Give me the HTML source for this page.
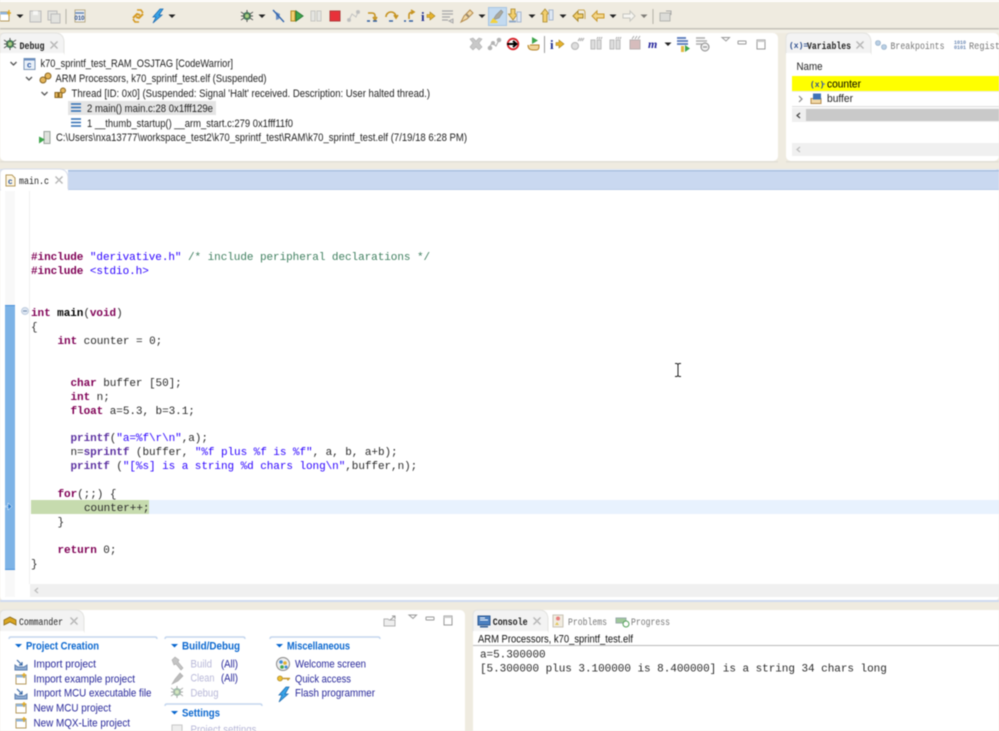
<!DOCTYPE html>
<html><head><meta charset="utf-8">
<style>
html,body{margin:0;padding:0;width:999px;height:731px;overflow:hidden;background:#efebe0}
svg{display:block;filter:blur(.45px)}
text{white-space:pre;font-family:"Liberation Sans",sans-serif;font-size:11px;fill:#222}
.m{font-family:"Liberation Mono",monospace;letter-spacing:-.06px;fill:#2a2a2a}
.k{font-weight:bold;fill:#7f0055}
.s{fill:#2a00ff}
.c{fill:#3f7f5f}
.f{font-weight:bold;fill:#5b30a0}
.b{font-weight:bold;fill:#000}
.t{font-family:"Liberation Mono",monospace;font-size:10px;fill:#222}
.t2{font-family:"Liberation Mono",monospace;font-size:10px;fill:#777}
.l{fill:#27279a}
.g{fill:#b8b8d8}
.h{font-weight:bold;fill:#0a67cf;font-size:11px}
</style></head><body>
<svg width="999" height="731" viewBox="0 0 999 731" xmlns="http://www.w3.org/2000/svg">
<defs>
<g id="dd"><path d="M-3.5-1.5h7L0 2z" fill="#222"/></g>
<g id="x"><path d="M-3.5-3.5l7 7m0-7l-7 7" stroke="#888" stroke-width="1.2" fill="none"/><path d="M-3.5-3.5l7 7m0-7l-7 7" stroke="#fff" stroke-width=".4" fill="none"/></g>
<g id="bug"><circle r="4" fill="#3f8a5a"/><path d="M-6-4l12 8M-6 4l12-8M0-6v12M-6 0h12" stroke="#555" stroke-width="1"/><circle r="2" fill="#a9d27f"/></g>
<g id="grey"><rect x="-5" y="-4" width="4" height="9" fill="#ddd" stroke="#bbb"/><rect x="1" y="-4" width="4" height="9" fill="#ddd" stroke="#bbb"/><path d="M1-5l1-2M3-5l1-2M5-5l1-2" stroke="#aaa"/></g>
<g id="lines"><path d="M-5-3.5h10M-5 0h10M-5 3.5h10" stroke="#2f6db3" stroke-width="1.6"/></g>
<g id="newp"><rect x="-5" y="-4" width="10" height="9" fill="#fff" stroke="#b59a5d"/><rect x="-5" y="-4" width="10" height="2.5" fill="#8fb4dc"/><path d="M3-6v5M1-4h4" stroke="#e0a820" stroke-width="1.4"/></g>
<g id="imp"><path d="M-6 0v5h12V0l-3 2h-6z" fill="#8fadd4" stroke="#5a7cae"/><path d="M-4-5l5 5M1-3v3h-3" stroke="#3a6aa8" stroke-width="1.2" fill="none"/></g>
<g id="step"><path d="M-4-3h4q3 0 3 3v2M1 1l2 3 2-3" stroke="#c69320" stroke-width="1.6" fill="none"/><path d="M-5 5h3M1 5h4" stroke="#2d5ca0" stroke-width="1.4"/></g>
</defs>

<!-- base -->
<rect width="999" height="731" fill="#efebe0"/>
<rect width="999" height="2" fill="#fff"/>
<rect x="0" y="28" width="999" height="1.5" fill="#c6c3ba"/>
<rect x="0" y="30" width="999" height="3" fill="#f3f0e8"/>

<!-- toolbar -->
<g>
<g transform="translate(6,16)"><rect x="-6" y="-4" width="9" height="9" fill="#fff" stroke="#b59a5d"/><rect x="-6" y="-4" width="9" height="2.5" fill="#8fb4dc"/><path d="M3-6v6M1-3h4" stroke="#e0a820" stroke-width="1.4"/></g>
<use href="#dd" x="20" y="16"/>
<g fill="#e2e2de" stroke="#bbb"><rect x="30" y="11" width="11" height="11"/><rect x="48" y="11" width="9" height="9"/><rect x="51" y="14" width="9" height="9"/></g>
<rect x="33" y="11" width="5" height="4" fill="#f7f7f5"/>
<rect x="65.500" y="9" width="1" height="15" fill="#b5b2a8"/>
<g transform="translate(80,16)"><rect x="-5" y="-6" width="10" height="12" fill="#f3f3f6" stroke="#b8ab87"/><rect x="-5" y="-4" width="9" height="2" fill="#7d9bc2"/><text x="-5.500" y="4" style="font-size:6px;font-weight:bold;fill:#2b4f88">010</text></g>
<g transform="translate(138,16)" stroke="#d59a22" stroke-width="2" fill="none"><path d="M-5 2l4-4 3 1"/><path d="M5-2l-4 4-3-1"/><path d="M-1-6l4 0 2 3" stroke-width="1.600"/><path d="M1 6l-4 0-2-3" stroke-width="1.600"/></g>
<path d="M160 9l-7 8h3l-3 6 9-8h-3l4-6z" fill="#38a4e8" stroke="#1d6ab0" stroke-width=".8"/>
<use href="#dd" x="172" y="16"/>
<use href="#bug" x="247" y="16"/>
<use href="#dd" x="262" y="16"/>
<g transform="translate(278,16)"><path d="M-2-4l4 2-1 5-3 1z" fill="#6a8ec4"/><path d="M-5-6L6 6" stroke="#2f63ad" stroke-width="1.300"/></g>
<g transform="translate(297,16)"><rect x="-6" y="-5" width="4" height="10" fill="#f3d173" stroke="#b48a24"/><path d="M-1-5l7 5-7 5z" fill="#3fa64c" stroke="#2a7c37"/></g>
<g fill="#e6e6e2" stroke="#c7c7c3"><rect x="311" y="11" width="4" height="10"/><rect x="317" y="11" width="4" height="10"/></g>
<rect x="330" y="11" width="10" height="10" fill="#e8313a" stroke="#b03a3a"/>
<g transform="translate(353,16)" stroke="#c2c2c2" fill="#bbb"><path d="M-4 4l3-6 4 3 2-5" fill="none"/><circle cx="-4" cy="4" r="1.500"/><circle cx="5" cy="-4" r="1.500"/></g>
<use href="#step" x="372" y="16"/>
<g transform="translate(391,16)"><path d="M-5 1a5 5 0 0 1 10 0M3-1l2 3 2-3" stroke="#c69320" stroke-width="1.600" fill="none"/><path d="M-2 5h4" stroke="#2d5ca0" stroke-width="1.400"/></g>
<g transform="translate(410,16)"><path d="M-1 3V-1q0-3 4-3M1-6l3 2-3 2" stroke="#c69320" stroke-width="1.600" fill="none"/><path d="M-6 5h2M-1 5h4" stroke="#2d5ca0" stroke-width="1.400"/></g>
<g transform="translate(428,16)"><text x="-7" y="5" style="font:bold 13px 'Liberation Serif',serif;fill:#1f2f8f">i</text><path d="M-1-1.500h3V-4l5 4-5 4V1.500h-3z" fill="#e7b32c" stroke="#a4811e" stroke-width=".6"/></g>
<g transform="translate(448,16)"><path d="M-6-5h11M-6-2h11M-6 1h8M-6 4h6" stroke="#a8a8a8" stroke-width="1.200"/><path d="M1 5l4-2v4z" fill="#ddd" stroke="#aaa"/></g>
<g transform="translate(467,16)"><path d="M-6 6l3-6 6-6 3 3-6 6z" fill="#f2d9a6" stroke="#b58c4d"/><path d="M-1-2l3 3" stroke="#9c8a70" stroke-width="2"/></g>
<use href="#dd" x="482" y="16"/>
<rect x="488.500" y="7.500" width="18" height="18" fill="#c3daf0" stroke="#a6c4e2"/>
<g transform="translate(497,16)"><path d="M-4 4l3-5 5-5 2 2-4 6z" fill="#a9a99f" stroke="#8a8a86" stroke-width=".6"/><path d="M-7 7l3-5 5 4-1 1z" fill="#f3d23f"/></g>
<g transform="translate(515,16)"><path d="M-4-7h4v5h2.500L-2 4-6.500-2H-4z" fill="#f2cf6e" stroke="#a8872b" stroke-width=".8"/><rect x="-6" y="4.500" width="7" height="2" fill="#8fa8c8"/><rect x="2" y="-4" width="4" height="10" fill="#dfe8f3" stroke="#a7b7cf"/></g>
<use href="#dd" x="532" y="16"/>
<g transform="translate(547,16)"><path d="M-2-7L-6-2h2v8h4v-8h2z" fill="#f2cf6e" stroke="#a8872b" stroke-width=".8"/><rect x="2" y="-6" width="4" height="10" fill="#dfe8f3" stroke="#a7b7cf"/></g>
<use href="#dd" x="563" y="16"/>
<path d="M573 16l5-5v3h5v4h-5v3z" fill="#f2cf6e" stroke="#a8872b"/><path d="M578 10h6l1 2v7" fill="none" stroke="#c8a552"/>
<path d="M592 16l5-5v3h7v4h-7v3z" fill="#f3d68a" stroke="#c8972a"/>
<use href="#dd" x="613" y="16"/>
<path d="M635 16l-5-5v3h-7v4h7v3z" fill="#f6f5f0" stroke="#c6c6c0"/>
<use href="#dd" x="644" y="16" opacity=".55"/>
<rect x="652.500" y="9" width="1" height="15" fill="#b5b2a8"/>
<g transform="translate(665,16)"><rect x="-5" y="-3" width="10" height="8" fill="#dcdcd8" stroke="#b4b4b0"/><path d="M1-5h5v4" fill="none" stroke="#a8a8a8"/></g>
</g>

<!-- Debug panel -->
<rect x="0" y="33" width="778" height="128" rx="5" fill="#fff"/>
<path d="M0 54V38q0-5 5-5h50q8 0 9 8v13z" fill="#f3f3f3" stroke="#e3e3e0"/>
<rect x="0" y="53" width="64" height="3" fill="#fff"/>
<rect x="0" y="161" width="778" height="1.500" fill="#e2dfd6"/>
<use href="#bug" x="10" y="44"/>
<text x="19.500" y="49" class="t" style="font-weight:bold" textLength="25" lengthAdjust="spacingAndGlyphs">Debug</text>
<use href="#x" x="54" y="45"/>

<!-- tree -->
<g stroke="#555" stroke-width="1.300" fill="none"><path d="M10.500 62l3 3 3-3M26 77l3 3 3-3M41.500 92l3 3 3-3"/></g>
<g transform="translate(29,63.500)"><rect x="-5" y="-5" width="11" height="11" fill="#e9f0f8" stroke="#7d97b8"/><rect x="-5" y="-5" width="11" height="2" fill="#6a8ec0"/><text x="-2" y="4" style="font-size:8px;font-weight:bold;fill:#2d5aa6">c</text></g>
<g transform="translate(45,78)" fill="#e5b65b" stroke="#8a6620"><circle cx="-2" cy="2" r="3"/><circle cx="3" cy="-2" r="3"/></g>
<g transform="translate(60,93.500)" fill="#e5b65b" stroke="#8a6620"><rect x="-5" y="-1" width="3" height="5"/><rect x="-1" y="-1" width="3" height="5"/><circle cx="3" cy="-3" r="2.500"/></g>
<rect x="68" y="101" width="148" height="14" fill="#e4e4e4"/>
<use href="#lines" x="76" y="107.500"/>
<use href="#lines" x="76" y="122.500"/>
<g transform="translate(45,137.500)"><rect x="-1" y="-6" width="6" height="12" fill="#dfe2dd" stroke="#9aa39c"/><path d="M-6-1l6 3-6 4z" fill="#3fa64c"/></g>
<text x="40.500" y="67" textLength="192.500" lengthAdjust="spacingAndGlyphs">k70_sprintf_test_RAM_OSJTAG [CodeWarrior]</text>
<text x="55.500" y="82" textLength="211" lengthAdjust="spacingAndGlyphs">ARM Processors, k70_sprintf_test.elf (Suspended)</text>
<text x="71.500" y="97" textLength="358.500" lengthAdjust="spacingAndGlyphs">Thread [ID: 0x0] (Suspended: Signal 'Halt' received. Description: User halted thread.)</text>
<text x="87" y="112" textLength="126" lengthAdjust="spacingAndGlyphs">2 main() main.c:28 0x1fff129e</text>
<text x="87" y="127" textLength="206" lengthAdjust="spacingAndGlyphs">1 __thumb_startup() __arm_start.c:279 0x1fff11f0</text>
<text x="56" y="141" textLength="411" lengthAdjust="spacingAndGlyphs">C:\Users\nxa13777\workspace_test2\k70_sprintf_test\RAM\k70_sprintf_test.elf (7/19/18 6:28 PM)</text>

<!-- Debug view toolbar -->
<g transform="translate(476,44)"><path d="M-6-5l3-1 3 3 3-3 3 1-3 4 3 4-3 3-3-3-3 3-3-3 3-4z" fill="#c8c8c8" stroke="#aeaeae" stroke-width=".6"/></g>
<g transform="translate(494,44)" stroke="#b4b4b4" fill="#b4b4b4"><path d="M-5 4l3-5 4 3 3-6" fill="none" stroke-width="1.200"/><circle cx="-4" cy="4" r="1.800"/><circle cx="-1" cy="-1" r="1.500"/><circle cx="5" cy="-4" r="1.800"/></g>
<g transform="translate(513,44)"><circle r="5.300" fill="#fff" stroke="#d8232a" stroke-width="1.800"/><path d="M-6 0H3M0-3l3.500 3L0 3" stroke="#000" stroke-width="2" fill="none"/></g>
<g transform="translate(533,44)"><path d="M-5 1q0 5 5 5h3q3 0 3-3v-2H-3" fill="#f0d59a" stroke="#b5852b"/><path d="M-1-7l6 3.500-6 3.500z" fill="#3fa64c"/></g>
<rect x="544" y="36" width="1" height="17" fill="#9b9b9b"/>
<g transform="translate(557,44)"><text x="-7" y="5" style="font:bold 13px 'Liberation Serif',serif;fill:#1f2f8f">i</text><path d="M-1-1.500h3V-4l5 4-5 4V1.500h-3z" fill="#e7b32c" stroke="#a4811e" stroke-width=".6"/></g>
<g transform="translate(577,44)" fill="#dedede" stroke="#b4b4b4"><circle cx="-2" cy="2" r="3.500"/><path d="M1-3l2-3M3-3l2-3M5-3l2-3" fill="none" stroke-width="1.200"/></g>
<use href="#grey" x="596" y="44"/>
<use href="#grey" x="615" y="44"/>
<rect x="630" y="40" width="10" height="9" fill="#d6bcbc" stroke="#b9b0b0"/><path d="M632 39l2-3M635 39l2-3M638 39l2-3" stroke="#aaa"/>
<text x="648" y="48" style="font:italic bold 12px 'Liberation Serif',serif;fill:#25259c">m</text>
<use href="#dd" x="668" y="44"/>
<g transform="translate(683,44)"><path d="M-6-6h9M-6-3h11M-6 0h11" stroke="#5577b9" stroke-width="1.800"/><rect x="-2" y="2" width="3" height="6" fill="#e2b93f"/><path d="M2 1l5 3.500L2 8z" fill="#3fa64c"/></g>
<g transform="translate(702,44)"><path d="M-6-6h9M-6-3h11M-6 0h6" stroke="#adadad" stroke-width="1.400"/><circle cx="3" cy="3" r="4" fill="#eee" stroke="#888"/><path d="M1 3h4" stroke="#888"/></g>
<path d="M722 37.500h7.500L726 41z" fill="none" stroke="#999"/>
<rect x="738" y="41" width="8" height="3" fill="none" stroke="#999" rx=".5"/>
<rect x="757" y="40" width="8" height="9" fill="none" stroke="#999"/><rect x="757" y="40" width="8" height="2" fill="#ccc"/>

<!-- Variables panel -->
<rect x="786" y="33" width="213" height="128" rx="5" fill="#fff"/>
<rect x="786" y="161" width="213" height="1.500" fill="#e2dfd6"/>
<path d="M786 54V38q0-5 5-5h72q7 0 8 8v13z" fill="#f3f3f3" stroke="#e3e3e0"/>
<rect x="786" y="53" width="85" height="3" fill="#fff"/>
<text x="789" y="48" style="font:bold 8px 'Liberation Mono',monospace;fill:#2d4f8f">(x)=</text>
<text x="807" y="49" class="t" style="font-weight:bold" textLength="44" lengthAdjust="spacingAndGlyphs">Variables</text>
<use href="#x" x="860" y="45"/>
<circle cx="878" cy="43" r="2.500" fill="#b9cfe4" stroke="#88a4c0" stroke-width=".6"/><circle cx="884" cy="47" r="2.500" fill="#b9cfe4" stroke="#88a4c0" stroke-width=".6"/>
<text x="890.500" y="49" class="t2" textLength="54" lengthAdjust="spacingAndGlyphs">Breakpoints</text>
<text x="954" y="44" style="font:bold 5px 'Liberation Mono',monospace;fill:#6d8ab5">1010</text><text x="954" y="49" style="font:bold 5px 'Liberation Mono',monospace;fill:#6d8ab5">0101</text>
<text x="969" y="49" class="t2" textLength="31" lengthAdjust="spacingAndGlyphs">Regist</text>
<text x="796.500" y="70" textLength="26" lengthAdjust="spacingAndGlyphs">Name</text>
<rect x="792" y="76" width="207" height="15" fill="#ffff00"/>
<rect x="792" y="91" width="207" height="1" fill="#eee"/>
<text x="810" y="87" style="font:bold 8px 'Liberation Mono',monospace;fill:#2d4f8f">(x)</text>
<circle cx="824" cy="84" r="1" fill="#7a8fb0"/>
<text x="827" y="87.500" textLength="34" lengthAdjust="spacingAndGlyphs" style="fill:#000">counter</text>
<text x="827" y="102" textLength="26" lengthAdjust="spacingAndGlyphs">buffer</text>
<path d="M799 96l3 3-3 3" stroke="#888" stroke-width="1.200" fill="none"/>
<g transform="translate(816,98.500)"><path d="M-5 0h10v5H-5z" fill="#f2d9a6" stroke="#b58c4d"/><path d="M-3-5h8v6h-8z" fill="#3f72b5"/></g>
<rect x="792" y="106" width="207" height="1" fill="#ddd"/>
<rect x="792" y="108" width="207" height="14" fill="#efefef"/>
<rect x="806" y="109" width="193" height="12" fill="#c9c9c9"/>
<path d="M800 113l-3 2.500 3 2.500" stroke="#444" stroke-width="1.200" fill="none"/>
<rect x="792" y="143" width="207" height="13" fill="#f0f0f0"/>
<path d="M800 147l-3 2.500 3 2.500" stroke="#bbb" stroke-width="1.200" fill="none"/>

<!-- Editor -->
<rect x="0" y="169" width="999" height="2" fill="#d9e2f3"/>
<rect x="0" y="169.500" width="999" height="431" rx="4" fill="#fff"/>
<rect x="68" y="170" width="931" height="19" fill="#c9d8f0"/>
<rect x="68" y="170" width="931" height="1.500" fill="#a9bfe0"/>
<rect x="68" y="189" width="931" height="1" fill="#b8cbe8"/>
<path d="M0 190V174q0-5 5-5h54q8 0 9 8v13z" fill="#fff" stroke="#d6dcea"/>
<rect x="1" y="189" width="67" height="3" fill="#fff"/>
<g transform="translate(10,180)"><path d="M-4-5h6l3 3v8H-4z" fill="#fff6e0" stroke="#b59a5d"/><text x="-2" y="4" style="font-size:8px;font-weight:bold;fill:#2d5aa6">c</text></g>
<text x="19" y="184" class="t" textLength="30" lengthAdjust="spacingAndGlyphs">main.c</text>
<use href="#x" x="59" y="180"/>
<rect x="5" y="191" width="10" height="406" fill="#f8f8f8"/>
<rect x="15" y="191" width="14" height="406" fill="#fff"/>
<rect x="29" y="191" width="1" height="393" fill="#f0f0f0"/>
<rect x="5" y="305" width="10" height="265" fill="#7db3e6"/>
<rect x="5" y="305" width="10" height="1" fill="#4a90d9"/>
<rect x="5" y="569" width="10" height="1" fill="#4a90d9"/>
<circle cx="25" cy="311" r="3.500" fill="#dde6f2" stroke="#b3c3d8" stroke-width=".8"/><path d="M23 311h4" stroke="#6f87a8"/>
<rect x="31" y="500" width="968" height="14" fill="#e8f2fe"/>
<rect x="31" y="500" width="118" height="14" fill="#c6dbae"/>
<path d="M5 506h3v-3l4 3.500-4 3.500v-3H5z" fill="#2f7fd0" stroke="#fff" stroke-width=".5"/>

<text class="m"><tspan class="k" x="31" y="260">#include</tspan><tspan class="s"> "derivative.h"</tspan><tspan class="c"> /* include peripheral declarations */</tspan></text>
<text class="m"><tspan class="k" x="31" y="274">#include</tspan><tspan class="s"> &lt;stdio.h&gt;</tspan></text>
<text class="m"><tspan class="k" x="31" y="316">int</tspan> <tspan class="b">main</tspan>(<tspan class="k">void</tspan>)</text>
<text class="m" x="31" y="330">{</text>
<text class="m"><tspan class="k" x="57.500" y="344">int</tspan> counter = 0;</text>
<text class="m"><tspan class="k" x="70.500" y="386">char</tspan> buffer [50];</text>
<text class="m"><tspan class="k" x="70.500" y="400">int</tspan> n;</text>
<text class="m"><tspan class="k" x="70.500" y="414">float</tspan> a=5.3, b=3.1;</text>
<text class="m"><tspan class="f" x="70.500" y="441">printf</tspan>(<tspan class="s">"a=%f\r\n"</tspan>,a);</text>
<text class="m" x="70.500" y="455">n=<tspan class="f">sprintf</tspan> (buffer, <tspan class="s">"%f plus %f is %f"</tspan>, a, b, a+b);</text>
<text class="m"><tspan class="f" x="70.500" y="469">printf</tspan> (<tspan class="s">"[%s] is a string %d chars long\n"</tspan>,buffer,n);</text>
<text class="m"><tspan class="k" x="57.500" y="497">for</tspan>(;;) {</text>
<text class="m" x="84" y="511">counter++;</text>
<text class="m" x="57.500" y="525">}</text>
<text class="m"><tspan class="k" x="57.500" y="553">return</tspan> 0;</text>
<text class="m" x="31" y="567">}</text>

<!-- I-beam cursor -->
<path d="M675 363.500h2l1 1 1-1h2M678 364.500v11M675 376.500h2l1-1 1 1h2" stroke="#222" stroke-width="1" fill="none"/>

<rect x="30" y="584" width="969" height="13" fill="#f0f0f0"/>
<path d="M38 588l-3 2.500 3 2.500" stroke="#bbb" stroke-width="1.200" fill="none"/>
<rect x="0" y="600" width="999" height="2" fill="#cfdaf0"/>

<!-- Commander -->
<rect x="0" y="610" width="465" height="125" rx="5" fill="#fff"/>
<path d="M0 632V615q0-5 5-5h70q8 0 9 8v14z" fill="#f3f3f3" stroke="#e3e3e0"/>
<rect x="0" y="631" width="84" height="3" fill="#fff"/>
<path d="M4 625v-5l6-3 6 3v5l-6-3z" fill="#d9a520" stroke="#8a6a1a" stroke-width=".8"/>
<text x="19" y="625" class="t" textLength="44" lengthAdjust="spacingAndGlyphs">Commander</text>
<use href="#x" x="74" y="621"/>
<g transform="translate(390,621)"><path d="M-6-2h4l1 1h6v6H-6z" fill="#eee" stroke="#b2b2b2"/><path d="M0-1l5-4M2-5h3v3" stroke="#999" fill="none"/></g>
<path d="M409 615h7.500L413 618.500z" fill="none" stroke="#999"/>
<rect x="426" y="617" width="8" height="3" fill="none" stroke="#999" rx=".5"/>
<rect x="444" y="616" width="8" height="9" fill="none" stroke="#999"/><rect x="444" y="616" width="8" height="2" fill="#ccc"/>

<g stroke="#c4d6ee" stroke-width="1.400" fill="none"><path d="M9 639q0-2 2-2h144q2 0 2 2"/><path d="M165 639q0-2 2-2h76q2 0 2 2"/><path d="M270 639q0-2 2-2h106q2 0 2 2"/><path d="M165 706q0-2 2-2h93q2 0 2 2"/></g>
<g fill="#0a67cf"><path d="M15 644h7l-3.500 3.500z"/><path d="M171 644h7l-3.500 3.500z"/><path d="M276 644h7l-3.500 3.500z"/><path d="M171 711h7l-3.500 3.500z"/></g>
<text class="h" x="26" y="649.500" textLength="73" lengthAdjust="spacingAndGlyphs">Project Creation</text>
<text class="h" x="182" y="649.500" textLength="58" lengthAdjust="spacingAndGlyphs">Build/Debug</text>
<text class="h" x="287" y="649.500" textLength="63" lengthAdjust="spacingAndGlyphs">Miscellaneous</text>
<text class="h" x="182" y="716.500" textLength="38" lengthAdjust="spacingAndGlyphs">Settings</text>

<use href="#imp" x="21" y="665"/>
<use href="#newp" x="21" y="679"/>
<use href="#imp" x="21" y="694"/>
<use href="#newp" x="21" y="708"/>
<use href="#newp" x="21" y="723"/>
<text class="l" x="33.500" y="667.500" textLength="62.500" lengthAdjust="spacingAndGlyphs">Import project</text>
<text class="l" x="33.500" y="682.500" textLength="101.500" lengthAdjust="spacingAndGlyphs">Import example project</text>
<text class="l" x="33.500" y="696.500" textLength="118" lengthAdjust="spacingAndGlyphs">Import MCU executable file</text>
<text class="l" x="33.500" y="711.500" textLength="77.500" lengthAdjust="spacingAndGlyphs">New MCU project</text>
<text class="l" x="33.500" y="726.500" textLength="96.500" lengthAdjust="spacingAndGlyphs">New MQX-Lite project</text>

<g transform="translate(177,663)"><path d="M-5-3l3-3 4 3-1 2 5 6-2 2-5-6-2 1z" fill="#c4c4c4" stroke="#aaa" stroke-width=".6"/></g>
<g transform="translate(177,678)"><path d="M-5 6l3-5 5-6 3 3-5 5z" fill="#bcbcbc" stroke="#aaa" stroke-width=".6"/></g>
<g transform="translate(177,692)" opacity=".5"><use href="#bug"/></g>
<g transform="translate(177,727)"><rect x="-5" y="-2" width="10" height="8" fill="#eee" stroke="#c7c7c7"/></g>
<text class="g" x="190.500" y="667.500" textLength="21.500" lengthAdjust="spacingAndGlyphs">Build</text>
<text class="l" x="221" y="667.500" textLength="17" lengthAdjust="spacingAndGlyphs">(All)</text>
<text class="g" x="190.500" y="681.500" textLength="24" lengthAdjust="spacingAndGlyphs">Clean</text>
<text class="l" x="221" y="681.500" textLength="17" lengthAdjust="spacingAndGlyphs">(All)</text>
<text class="g" x="190.500" y="696.500" textLength="28" lengthAdjust="spacingAndGlyphs">Debug</text>
<text class="g" x="190.500" y="733" textLength="66" lengthAdjust="spacingAndGlyphs">Project settings</text>

<g transform="translate(283,664)"><circle r="6.500" fill="#eee" stroke="#888"/><circle cx="-2" cy="-2" r="1.800" fill="#3c8ad8"/><circle cx="2" cy="-1" r="1.800" fill="#e0b030"/><circle cx="-1" cy="3" r="1.800" fill="#3fa64c"/><circle cx="3" cy="3" r="1.500" fill="#3c8ad8"/></g>
<g transform="translate(283,678.500)"><circle cx="-3" r="2.500" fill="#f0c030" stroke="#a8872b" stroke-width=".8"/><path d="M0 0h7M5 0v2" stroke="#c69320" stroke-width="1.500"/></g>
<path d="M286 687l-7 8h3l-3 7 9-8h-3l4-7z" fill="#38a4e8" stroke="#1d6ab0" stroke-width=".8"/>
<text class="l" x="295" y="667.500" textLength="71" lengthAdjust="spacingAndGlyphs">Welcome screen</text>
<text class="l" x="295" y="682.500" textLength="56" lengthAdjust="spacingAndGlyphs">Quick access</text>
<text class="l" x="295" y="696.500" textLength="80" lengthAdjust="spacingAndGlyphs">Flash programmer</text>

<!-- Console -->
<rect x="473" y="610" width="530" height="125" rx="5" fill="#fff"/>
<path d="M473 632V615q0-5 5-5h61q8 0 9 8v14z" fill="#f3f3f3" stroke="#e3e3e0"/>
<rect x="473" y="631" width="75" height="2" fill="#fff"/>
<g transform="translate(484,621)"><rect x="-6" y="-5" width="12" height="9" fill="#4a7fc0" stroke="#2e5a92"/><path d="M-4-3h5M-4-1h8" stroke="#fff"/><rect x="-4" y="5" width="8" height="1.500" fill="#2e5a92"/></g>
<text x="492.700" y="625" class="t" style="font-weight:bold" textLength="35" lengthAdjust="spacingAndGlyphs">Console</text>
<use href="#x" x="537" y="621"/>
<g transform="translate(558,621)"><rect x="-5" y="-6" width="10" height="12" fill="#f1ece0" stroke="#c8c3b5"/><circle cy="-2.500" r="2" fill="#e87f7f"/><path d="M-3 4l2-3 2 3z" fill="#e3c65a"/></g>
<text x="568" y="625" class="t2" textLength="39" lengthAdjust="spacingAndGlyphs">Problems</text>
<g transform="translate(622,621)"><rect x="-6" y="-3" width="10" height="5" fill="#9ec89a" stroke="#9aa"/><circle cx="4" cy="3" r="3" fill="#fff" stroke="#55a05a"/></g>
<text x="631" y="625" class="t2" textLength="39" lengthAdjust="spacingAndGlyphs">Progress</text>
<text x="478" y="642.500" textLength="155" lengthAdjust="spacingAndGlyphs" style="fill:#111">ARM Processors, k70_sprintf_test.elf</text>
<rect x="473" y="645" width="526" height="1" fill="#bbb"/>
<text class="m" x="480" y="657.500" style="letter-spacing:-.04px">a=5.300000</text>
<text class="m" x="480" y="671.500" style="letter-spacing:-.04px">[5.300000 plus 3.100000 is 8.400000] is a string 34 chars long</text>
</svg>
</body></html>
